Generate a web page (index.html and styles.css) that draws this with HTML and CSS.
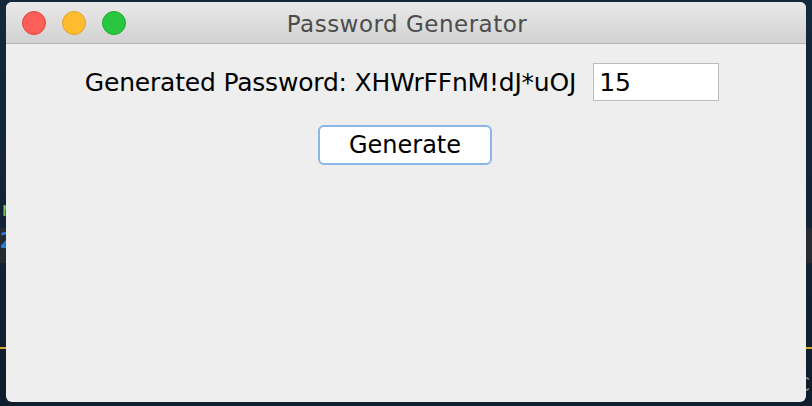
FILE: index.html
```html
<!DOCTYPE html>
<html>
<head>
<meta charset="utf-8">
<link rel="stylesheet" href="styles.css">
</head>
<body>
<div class="desk">
  <span class="bg-r">r</span>
  <div class="bg-band bg-band-left"></div>
  <div class="bg-band bg-band-right"></div>
  <span class="bg-two">2</span>
  <div class="bg-line bg-line-left"></div>
  <div class="bg-line bg-line-right"></div>
  <span class="bg-c">C</span>
  <div class="window">
    <div class="titlebar">
      <div class="lights">
        <span class="light red"></span>
        <span class="light yellow"></span>
        <span class="light green"></span>
      </div>
      <div class="title">Password Generator</div>
    </div>
    <div class="content">
      <div class="row">
        <span class="label">Generated Password: XHWrFFnM!dJ*uOJ</span>
        <div class="field">15</div>
      </div>
      <div class="btn-row">
        <button class="btn">Generate</button>
      </div>
    </div>
  </div>
</div>
</body>
</html>
```
FILE: styles.css
```css
* { box-sizing: border-box; }
html, body { margin: 0; padding: 0; }
body {
  width: 812px;
  height: 406px;
  overflow: hidden;
  background: linear-gradient(#14283c, #0f1e2d);
  font-family: "DejaVu Sans", "Noto Sans", sans-serif;
}
.desk {
  position: relative;
  width: 812px;
  height: 406px;
  padding: 2px 6px 4px 6px;
}
.bg-r {
  position: absolute; left: 0; top: 197px;
  color: #7ec46a; font-size: 20px; font-family: "DejaVu Sans Mono", monospace;
}
.bg-band { position: absolute; top: 228px; height: 35px; background: #252b31; }
.bg-band-left { left: 0; width: 6px; }
.bg-band-right { right: 0; width: 6px; }
.bg-two {
  position: absolute; left: 0; top: 228px;
  color: #2a7fd4; font-size: 22px; font-weight: bold; font-family: "DejaVu Sans Mono", monospace;
}
.bg-line { position: absolute; top: 347px; height: 2px; background: #d8a42a; }
.bg-line-left { left: 0; width: 6px; }
.bg-line-right { right: 0; width: 6px; }
.bg-c {
  position: absolute; left: 796px; top: 372px;
  color: #8a9099; font-size: 20px;
}
.window {
  position: relative;
  width: 800px;
  height: 400px;
  border-radius: 6px;
  overflow: hidden;
  background: #eeeeee;
  display: flex;
  flex-direction: column;
}
.titlebar {
  position: relative;
  height: 42px;
  background: linear-gradient(#e9e9e9, #d2d2d2);
  border-bottom: 1px solid #b2b2b2;
  display: flex;
  align-items: center;
  justify-content: center;
}
.lights {
  position: absolute;
  left: 16px;
  top: 9px;
  display: flex;
  gap: 16px;
}
.light {
  width: 24px; height: 24px; border-radius: 50%;
  display: block;
}
.red { background: #fd5e57; border: 1px solid #e2463f; }
.yellow { background: #febc2e; border: 1px solid #e1a229; }
.green { background: #29c73f; border: 1px solid #1eac2d; }
.title {
  font-size: 23px;
  color: #4c4c4c;
  letter-spacing: 0.5px;
  padding-top: 2px;
  margin-left: 2px;
}
.content {
  flex: 1;
  display: flex;
  flex-direction: column;
  align-items: center;
  padding-top: 19px;
}
.row {
  display: flex;
  align-items: center;
  gap: 17px;
  margin-right: 8px;
}
.label {
  font-size: 25px;
  letter-spacing: -0.2px;
  color: #000;
}
.field {
  width: 126px;
  height: 38px;
  background: #fff;
  border: 1px solid #bdbdbd;
  font-size: 25px;
  color: #000;
  padding: 0 0 0 5px;
  display: flex;
  align-items: center;
}
.btn-row {
  margin-top: 24px;
  margin-left: -2px;
}
.btn {
  width: 174px;
  height: 40px;
  background: #fff;
  border: 2px solid #8ab6ea;
  border-radius: 6px;
  font-family: "DejaVu Sans", "Noto Sans", sans-serif;
  font-size: 24px;
  color: #000;
  padding: 0;
}
```
